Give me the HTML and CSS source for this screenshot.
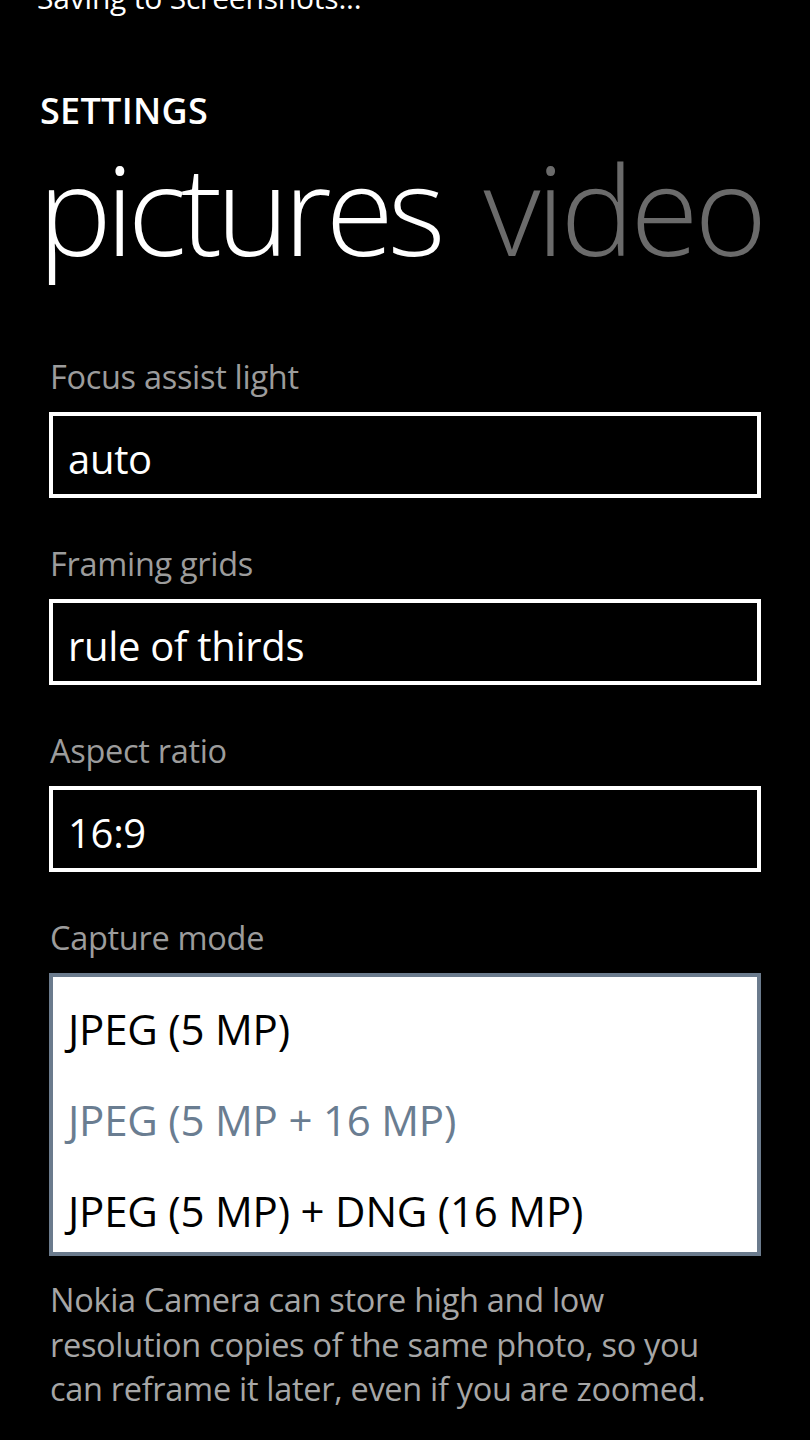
FILE: index.html
```html
<!DOCTYPE html>
<html>
<head>
<meta charset="utf-8">
<link rel="stylesheet" href="styles.css">
</head>
<body>
<div class="page">
  <div class="status">Saving to Screenshots...</div>
  <div class="app-title">SETTINGS</div>
  <div class="pivot">
    <span class="pivot-item active">pictures</span>
    <span class="pivot-item">video</span>
  </div>
  <div class="settings">
    <div class="field">
      <div class="label">Focus assist light</div>
      <div class="picker">auto</div>
    </div>
    <div class="field">
      <div class="label">Framing grids</div>
      <div class="picker">rule of thirds</div>
    </div>
    <div class="field">
      <div class="label">Aspect ratio</div>
      <div class="picker">16:9</div>
    </div>
    <div class="field">
      <div class="label">Capture mode</div>
      <div class="picker-open">
        <div class="option">JPEG (5 MP)</div>
        <div class="option selected">JPEG (5 MP + 16 MP)</div>
        <div class="option">JPEG (5 MP) + DNG (16 MP)</div>
      </div>
    </div>
    <p class="desc">Nokia Camera can store high and low resolution copies of the same photo, so you can reframe it later, even if you are zoomed.</p>
  </div>
</div>
</body>
</html>
```
FILE: styles.css
```css
html, body {
  margin: 0;
  padding: 0;
  background: #000;
}
body {
  font-family: "Open Sans", "Noto Sans", sans-serif;
  color: #fff;
  width: 810px;
  height: 1440px;
  overflow: hidden;
}
.page {
  display: flex;
  flex-direction: column;
}
.status {
  font-size: 30px;
  line-height: 36px;
  margin-top: -20px;
  padding-left: 37px;
  color: #fff;
  letter-spacing: -0.2px;
}
.app-title {
  font-size: 36px;
  font-weight: 600;
  line-height: 36px;
  margin-top: 77px;
  padding-left: 40px;
  letter-spacing: 0.3px;
}
.pivot {
  display: flex;
  gap: 44px;
  padding-left: 38px;
  margin-top: 14px;
  font-size: 124px;
  line-height: 130px;
  font-weight: 300;
  letter-spacing: -6px;
  white-space: nowrap;
}
.pivot-item {
  color: #6b6b6b;
  letter-spacing: -4px;
}
.pivot-item.active {
  color: #fff;
  letter-spacing: -6px;
}
.settings {
  display: flex;
  flex-direction: column;
  padding: 0 49px;
  margin-top: 84px;
}
.field {
  display: flex;
  flex-direction: column;
}
.label {
  font-size: 32.5px;
  line-height: 40px;
  color: #9c9c9c;
  padding-left: 1px;
  margin-bottom: 15px;
  letter-spacing: -0.3px;
}
.picker {
  border: 4px solid #fff;
  height: 86px;
  box-sizing: border-box;
  display: flex;
  align-items: center;
  padding: 6px 0 0 15px;
  font-size: 40px;
  color: #fff;
  margin-bottom: 46px;
  letter-spacing: -0.3px;
}
.picker-open {
  border: 4px solid #6b7b8d;
  background: #fff;
  height: 283px;
  box-sizing: border-box;
  display: flex;
  flex-direction: column;
  justify-content: center;
  padding: 9px 0 0 15px;
  margin-bottom: 22px;
}
.option {
  font-size: 42px;
  line-height: 91px;
  color: #000;
  letter-spacing: -0.2px;
}
.option.selected {
  color: #6a7d91;
}
.desc {
  margin: 0;
  padding-left: 1px;
  max-width: 680px;
  font-size: 32.5px;
  line-height: 44.5px;
  color: #a6a6a6;
  letter-spacing: -0.3px;
}
```
